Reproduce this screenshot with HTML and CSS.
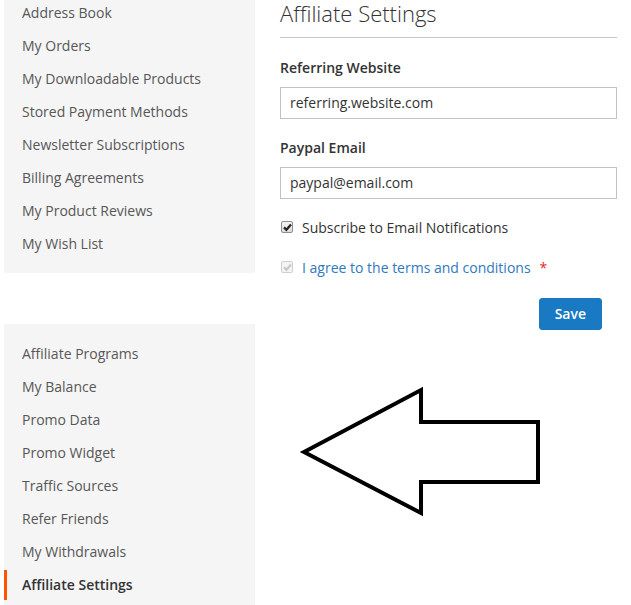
FILE: index.html
```html
<!DOCTYPE html>
<html lang="en">
<head>
<meta charset="utf-8">
<title>Affiliate Settings</title>
<link rel="stylesheet" href="styles.css">
</head>
<body>
<div class="page">
  <aside class="sidebar">
    <nav class="nav-block nav-first">
      <a class="nav-item" href="#">Address Book</a>
      <a class="nav-item" href="#">My Orders</a>
      <a class="nav-item" href="#">My Downloadable Products</a>
      <a class="nav-item" href="#">Stored Payment Methods</a>
      <a class="nav-item" href="#">Newsletter Subscriptions</a>
      <a class="nav-item" href="#">Billing Agreements</a>
      <a class="nav-item" href="#">My Product Reviews</a>
      <a class="nav-item" href="#">My Wish List</a>
    </nav>
    <nav class="nav-block nav-second">
      <a class="nav-item" href="#">Affiliate Programs</a>
      <a class="nav-item" href="#">My Balance</a>
      <a class="nav-item" href="#">Promo Data</a>
      <a class="nav-item" href="#">Promo Widget</a>
      <a class="nav-item" href="#">Traffic Sources</a>
      <a class="nav-item" href="#">Refer Friends</a>
      <a class="nav-item" href="#">My Withdrawals</a>
      <strong class="nav-item nav-active">Affiliate Settings</strong>
    </nav>
  </aside>
  <main class="main">
    <h2 class="legend">Affiliate Settings</h2>
    <div class="field">
      <label class="field-label">Referring Website</label>
      <div class="input">referring.website.com</div>
    </div>
    <div class="field">
      <label class="field-label">Paypal Email</label>
      <div class="input">paypal@email.com</div>
    </div>
    <div class="check-row">
      <span class="checkbox">
        <svg width="13" height="13" viewBox="0 0 13 13"><path d="M3 6.4 L5.4 8.8 L10 3.6" fill="none" stroke="#222" stroke-width="2.2"/></svg>
      </span>
      <span class="check-text">Subscribe to Email Notifications</span>
    </div>
    <div class="check-row">
      <span class="checkbox checkbox-disabled">
        <svg width="13" height="13" viewBox="0 0 13 13"><path d="M3 6.4 L5.4 8.8 L10 3.6" fill="none" stroke="#c9c9c9" stroke-width="2.2"/></svg>
      </span>
      <a class="check-link" href="#">I agree to the terms and conditions</a>
      <span class="required">*</span>
    </div>
    <div class="actions">
      <button class="btn-save" type="button">Save</button>
    </div>
  </main>
</div>
<svg class="arrow" width="631" height="605" viewBox="0 0 631 605">
  <polygon points="304,452 421,390 421,422 538,422 538,482 421,482 421,513" fill="none" stroke="#000" stroke-width="4" stroke-linejoin="miter"/>
</svg>
</body>
</html>
```
FILE: styles.css
```css
html, body {
  margin: 0;
  padding: 0;
  background: #fff;
}
body {
  position: relative;
  width: 631px;
  height: 605px;
  overflow: hidden;
  font-family: "Open Sans", "Liberation Sans", sans-serif;
  font-size: 14px;
  color: #333;
}
.page {
  display: flex;
  align-items: flex-start;
}
.sidebar {
  width: 251px;
  margin-left: 4px;
  display: flex;
  flex-direction: column;
}
.nav-block {
  background: #f5f5f5;
  display: flex;
  flex-direction: column;
}
.nav-first {
  margin-top: -4px;
  padding-bottom: 13px;
}
.nav-second {
  margin-top: 51px;
  padding: 13px 0;
}
.nav-item {
  display: block;
  line-height: 33px;
  height: 33px;
  padding-left: 18px;
  color: #575757;
  text-decoration: none;
  font-weight: 400;
}
.nav-active {
  color: #333;
  font-weight: 600;
  background: linear-gradient(#ff5501, #ff5501) no-repeat 0 50% / 3px 30px;
}
.main {
  margin-left: 25px;
  width: 337px;
}
.legend {
  margin: 0 0 20px;
  font-size: 22px;
  font-weight: 300;
  line-height: 26px;
  color: #333;
  padding-bottom: 11px;
  border-bottom: 1px solid #c6c6c6;
}
.field {
  margin-bottom: 19px;
}
.field-label {
  display: block;
  font-weight: 600;
  line-height: 20px;
  margin-bottom: 9px;
  color: #333;
}
.input {
  box-sizing: border-box;
  height: 32px;
  border: 1px solid #c2c2c2;
  padding: 0 9px;
  line-height: 30px;
  color: #333;
  background: #fff;
}
.check-row {
  display: flex;
  align-items: flex-start;
  line-height: 20px;
  margin-bottom: 20px;
  margin-left: 1px;
}
.checkbox {
  box-sizing: border-box;
  width: 12px;
  height: 12px;
  margin-top: 3px;
  margin-right: 9px;
  border: 1px solid #8d8d8d;
  border-radius: 2px;
  background: linear-gradient(#f4f4f4, #dcdcdc);
  display: flex;
  align-items: center;
  justify-content: center;
  overflow: hidden;
}
.checkbox svg {
  flex: none;
  display: block;
}
.checkbox-disabled {
  border-color: #cfcfcf;
  background: #f4f4f4;
}
.check-text {
  color: #333;
}
.check-link {
  color: #2f79be;
  text-decoration: none;
}
.required {
  color: #e02b27;
  margin-left: 9px;
}
.actions {
  display: flex;
  justify-content: flex-end;
  padding-right: 15px;
}
.btn-save {
  box-sizing: border-box;
  height: 32px;
  padding: 0 15px;
  border: 1px solid #1979c3;
  border-radius: 3px;
  background: #1979c3;
  color: #fff;
  font-family: "Open Sans", "Liberation Sans", sans-serif;
  font-size: 14px;
  font-weight: 600;
  line-height: 30px;
}
.arrow {
  position: absolute;
  left: 0;
  top: 0;
  pointer-events: none;
}
```
